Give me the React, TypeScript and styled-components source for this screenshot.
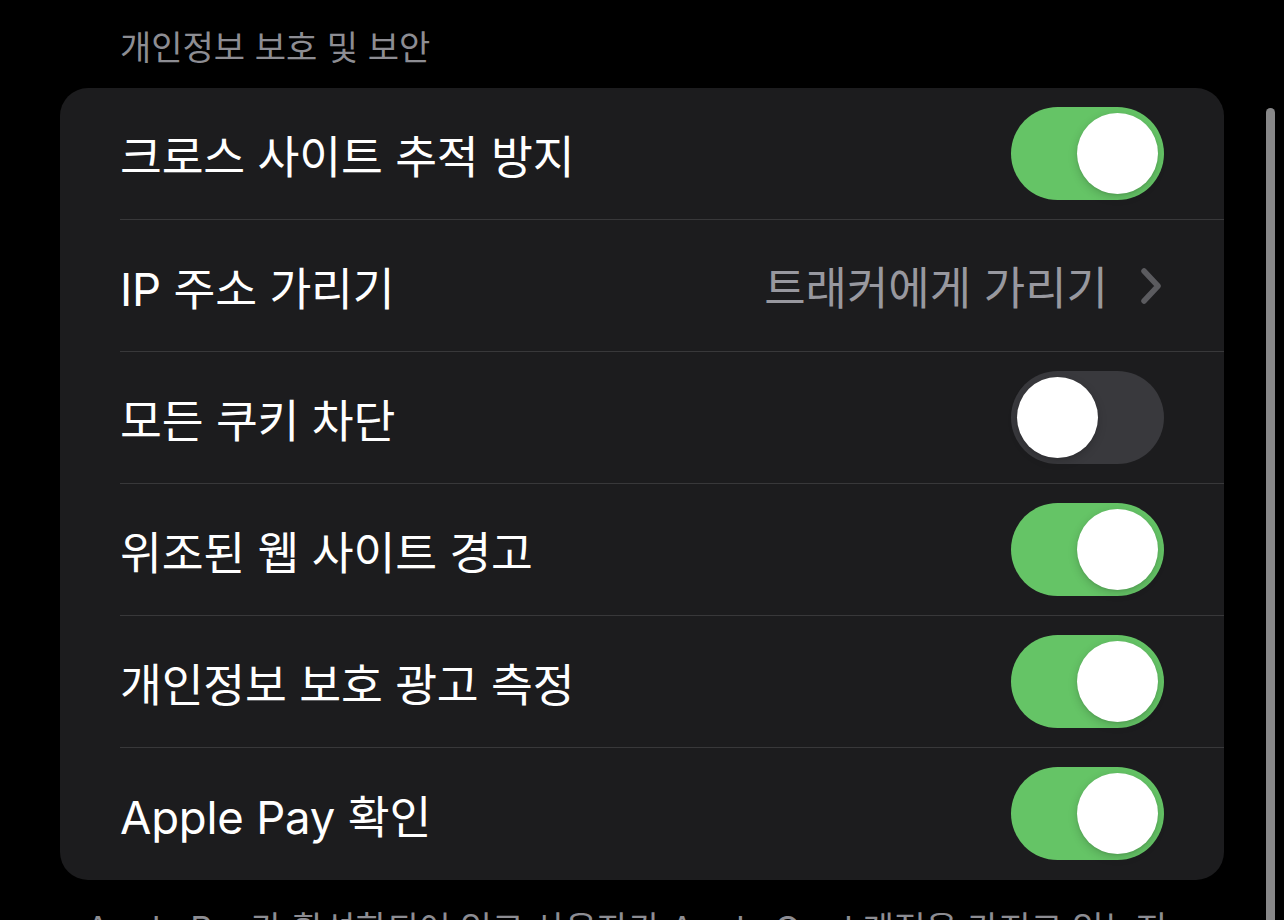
import styled, { createGlobalStyle } from "styled-components";

const GlobalStyle = createGlobalStyle`
  html, body {
    margin: 0;
    padding: 0;
    background: #000;
    overflow: hidden;
  }
  body {
    font-family: Inter, "Noto Sans CJK KR", "Noto Sans", sans-serif;
    -webkit-font-smoothing: antialiased;
  }
`;

const Page = styled.div`
  min-height: 920px;
  padding-top: 26px;
  background: #000;
`;

const SectionHeader = styled.div`
  padding-left: 120px;
  height: 44px;
  line-height: 44px;
  font-size: 34px;
  color: #8d8d93;
  margin-bottom: 18px;
`;

const Card = styled.div`
  margin: 0 60px;
  background: #1c1c1e;
  border-radius: 28px;
  overflow: hidden;
`;

const Row = styled.div`
  padding-left: 60px;
`;

const RowInner = styled.div<{ $last?: boolean }>`
  height: 131px;
  display: flex;
  align-items: center;
  justify-content: space-between;
  padding-right: 60px;
  border-bottom: 1px solid ${(p) => (p.$last ? "transparent" : "#38383a")};
`;

const Label = styled.span`
  font-size: 45.5px;
  color: #fff;
  letter-spacing: -0.2px;
`;

const Detail = styled.div`
  display: flex;
  align-items: center;
  gap: 32px;
  padding-right: 2px;
`;

const DetailText = styled.span`
  font-size: 45px;
  color: #98989f;
`;

const Track = styled.div<{ $on: boolean }>`
  width: 153px;
  height: 93px;
  border-radius: 47px;
  padding: 6px;
  box-sizing: border-box;
  background: ${(p) => (p.$on ? "#65c466" : "#39393d")};
  display: flex;
  justify-content: ${(p) => (p.$on ? "flex-end" : "flex-start")};
  align-items: center;
`;

const Knob = styled.div`
  width: 81px;
  height: 81px;
  border-radius: 50%;
  background: #fff;
  box-shadow: 0 3px 10px rgba(0, 0, 0, 0.18), 0 1px 2px rgba(0, 0, 0, 0.08);
`;

const Footer = styled.div`
  margin-top: 27px;
  padding: 0 80px 0 86px;
  font-size: 34.5px;
  line-height: 44px;
  color: #8d8d93;
`;

const ScrollThumb = styled.div`
  position: fixed;
  left: 1266px;
  top: 108px;
  width: 9px;
  height: 840px;
  border-radius: 5px;
  background: #888889;
`;

const Toggle = ({ on }: { on: boolean }) => (
  <Track $on={on}>
    <Knob />
  </Track>
);

const Chevron = () => (
  <svg width="22" height="36" viewBox="0 0 22 36" fill="none">
    <path
      d="M4 3 L18 18 L4 33"
      stroke="#5b5b5f"
      strokeWidth="5.5"
      strokeLinecap="round"
      strokeLinejoin="round"
    />
  </svg>
);

type Item = { label: string; on?: boolean; detail?: string };

const items: Item[] = [
  { label: "크로스 사이트 추적 방지", on: true },
  { label: "IP 주소 가리기", detail: "트래커에게 가리기" },
  { label: "모든 쿠키 차단", on: false },
  { label: "위조된 웹 사이트 경고", on: true },
  { label: "개인정보 보호 광고 측정", on: true },
  { label: "Apple Pay 확인", on: true },
];

export default function App() {
  return (
    <>
      <GlobalStyle />
      <Page>
        <SectionHeader>개인정보 보호 및 보안</SectionHeader>
        <Card>
          {items.map((item, i) => (
            <Row key={item.label}>
              <RowInner $last={i === items.length - 1}>
                <Label>{item.label}</Label>
                {item.detail ? (
                  <Detail>
                    <DetailText>{item.detail}</DetailText>
                    <Chevron />
                  </Detail>
                ) : (
                  <Toggle on={!!item.on} />
                )}
              </RowInner>
            </Row>
          ))}
        </Card>
        <Footer>
          Apple Pay가 활성화되어 있고 사용자가 Apple Card 계정을 가지고 있는지
          웹 사이트가 확인하도록 허용합니다.
        </Footer>
      </Page>
      <ScrollThumb />
    </>
  );
}
